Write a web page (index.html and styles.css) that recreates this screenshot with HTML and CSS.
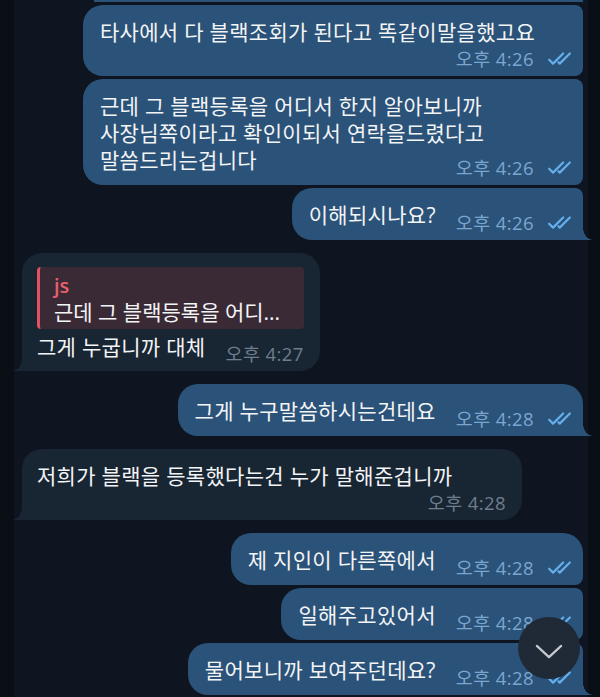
FILE: index.html
```html
<!DOCTYPE html>
<html lang="ko">
<head>
<meta charset="utf-8">
<title>Chat</title>
<link rel="stylesheet" href="styles.css">
</head>
<body>
<div class="screen">
  <div class="chat">
    <div class="row row-out first"><div class="bubble bubble-out bubble-cut"></div></div>

    <div class="row row-out grouped">
      <div class="bubble bubble-out out-mid bubble-wide">
        <span class="text">타사에서 다 블랙조회가 된다고 똑같이말을했고요</span>
        <div class="meta-row"><span class="time">오후 4:26</span><svg class="checks" viewBox="0 0 24 13"><path d="M1 7.2 L4.6 10.8 L14 1.4 M9.6 9.6 L10.8 10.8 L20.2 1.4"/></svg></div>
      </div>
    </div>

    <div class="row row-out grouped">
      <div class="bubble bubble-out out-mid">
        <span class="text">근데 그 블랙등록을 어디서 한지 알아보니까 사장님쪽이라고 확인이되서 연락을드렸다고 말씀드리는겁니다</span>
        <span class="meta"><span class="time">오후 4:26</span><svg class="checks" viewBox="0 0 24 13"><path d="M1 7.2 L4.6 10.8 L14 1.4 M9.6 9.6 L10.8 10.8 L20.2 1.4"/></svg></span>
      </div>
    </div>

    <div class="row row-out grouped">
      <div class="bubble bubble-out out-last">
        <span class="text">이해되시나요?</span>
        <span class="meta"><span class="time">오후 4:26</span><svg class="checks" viewBox="0 0 24 13"><path d="M1 7.2 L4.6 10.8 L14 1.4 M9.6 9.6 L10.8 10.8 L20.2 1.4"/></svg></span>
      </div>
    </div>

    <div class="row row-in">
      <div class="bubble bubble-in in-single">
        <div class="quote">
          <div class="quote-name">js</div>
          <div class="quote-text">근데 그 블랙등록을 어디...</div>
        </div>
        <span class="text">그게 누굽니까 대체</span>
        <span class="meta meta-in"><span class="time">오후 4:27</span></span>
      </div>
    </div>

    <div class="row row-out">
      <div class="bubble bubble-out out-single">
        <span class="text">그게 누구말씀하시는건데요</span>
        <span class="meta"><span class="time">오후 4:28</span><svg class="checks" viewBox="0 0 24 13"><path d="M1 7.2 L4.6 10.8 L14 1.4 M9.6 9.6 L10.8 10.8 L20.2 1.4"/></svg></span>
      </div>
    </div>

    <div class="row row-in">
      <div class="bubble bubble-in in-single bubble-wide">
        <span class="text">저희가 블랙을 등록했다는건 누가 말해준겁니까</span>
        <div class="meta-row"><span class="time">오후 4:28</span></div>
      </div>
    </div>

    <div class="row row-out">
      <div class="bubble bubble-out out-first">
        <span class="text">제 지인이 다른쪽에서</span>
        <span class="meta"><span class="time">오후 4:28</span><svg class="checks" viewBox="0 0 24 13"><path d="M1 7.2 L4.6 10.8 L14 1.4 M9.6 9.6 L10.8 10.8 L20.2 1.4"/></svg></span>
      </div>
    </div>

    <div class="row row-out grouped">
      <div class="bubble bubble-out out-mid">
        <span class="text">일해주고있어서</span>
        <span class="meta"><span class="time">오후 4:28</span><svg class="checks" viewBox="0 0 24 13"><path d="M1 7.2 L4.6 10.8 L14 1.4 M9.6 9.6 L10.8 10.8 L20.2 1.4"/></svg></span>
      </div>
    </div>

    <div class="row row-out grouped">
      <div class="bubble bubble-out out-last">
        <span class="text">물어보니까 보여주던데요?</span>
        <span class="meta"><span class="time">오후 4:28</span><svg class="checks" viewBox="0 0 24 13"><path d="M1 7.2 L4.6 10.8 L14 1.4 M9.6 9.6 L10.8 10.8 L20.2 1.4"/></svg></span>
      </div>
    </div>
  </div>

  <button class="scroll-down" type="button" aria-label="아래로">
    <svg viewBox="0 0 30 16"><polyline points="2,2 15,14 28,2"/></svg>
  </button>
</div>
</body>
</html>
```

FILE: styles.css
```css
* {
  box-sizing: border-box;
}

html,
body {
  margin: 0;
  padding: 0;
}

body {
  width: 600px;
  height: 697px;
  overflow: hidden;
  background: #0a0f16;
  font-family: "Open Sans", "Noto Sans CJK KR", sans-serif;
  color: #f3f4f6;
}

.screen {
  position: relative;
  width: 600px;
  height: 697px;
  overflow: hidden;
}

.chat {
  margin-left: 14px;
  width: 574px;
  height: 697px;
  background: #0e1520;
  padding: 0 5px 0 8px;
  display: flex;
  flex-direction: column;
}

.row {
  display: flex;
  flex: none;
  margin-top: 13px;
}

.row.first {
  margin-top: 0;
}

.row.grouped {
  margin-top: 3px;
}

.row-out {
  justify-content: flex-end;
}

.row-in {
  justify-content: flex-start;
}

.bubble {
  position: relative;
  max-width: 500px;
  padding: 14px 9px 7px 17px;
  font-size: 21px;
  line-height: 27px;
  border-radius: 20px;
}

.bubble-wide {
  width: 500px;
}

.bubble-out {
  --bubble: #2b5278;
  background: var(--bubble);
}

.bubble-in {
  --bubble: #182533;
  background: var(--bubble);
  padding: 14px 16px 7px 15px;
}

.bubble-cut {
  width: 489px;
  height: 2px;
  padding: 0;
  border-radius: 0;
}

.out-first {
  border-radius: 20px 20px 8px 20px;
}

.out-mid {
  border-radius: 20px 8px 8px 20px;
}

.out-last {
  border-radius: 20px 8px 0 20px;
}

.out-single {
  border-radius: 20px 20px 0 20px;
}

.in-single {
  border-radius: 20px 20px 20px 0;
}

.out-last::after,
.out-single::after {
  content: "";
  position: absolute;
  right: -10px;
  bottom: 0;
  width: 10px;
  height: 12px;
  background: radial-gradient(10px 12px at 100% 0, transparent 96%, var(--bubble) 100%);
}

.in-single::before {
  content: "";
  position: absolute;
  left: -10px;
  bottom: 0;
  width: 10px;
  height: 12px;
  background: radial-gradient(10px 12px at 0 0, transparent 96%, var(--bubble) 100%);
}

.text {
  word-break: keep-all;
  letter-spacing: 0.3px;
}

.meta {
  float: right;
  margin: 11px 0 0 20px;
  height: 20px;
  display: flex;
  align-items: center;
  gap: 14px;
}

.meta-in {
  margin: 10px 0 0 20px;
}

.meta-row {
  display: flex;
  justify-content: flex-end;
  align-items: center;
  gap: 14px;
  height: 20px;
  margin-top: 3px;
}

.time {
  font-size: 18.5px;
  line-height: 20px;
  letter-spacing: 0.4px;
  white-space: nowrap;
  color: #7ba6d0;
}

.bubble-in .time {
  color: #6e7e8e;
}

.checks {
  width: 26px;
  height: 14px;
  fill: none;
  stroke: #64b0ee;
  stroke-width: 2;
  stroke-linecap: round;
  stroke-linejoin: round;
}

.quote {
  margin: 0 0 5px;
  background: #3a2a36;
  border-left: 3px solid #e0525f;
  border-radius: 4px;
  padding: 6px 12px 4px 14px;
}

.quote-name {
  color: #e8606e;
  font-weight: 600;
  font-size: 20px;
  line-height: 26px;
}

.quote-text {
  font-size: 21px;
  line-height: 26px;
  white-space: nowrap;
}

.scroll-down {
  position: absolute;
  left: 518px;
  top: 617px;
  width: 62px;
  height: 62px;
  border: 0;
  border-radius: 50%;
  background: #1f2a36;
  padding: 7px 0 0;
  display: flex;
  align-items: center;
  justify-content: center;
}

.scroll-down svg {
  width: 28px;
  height: 15px;
  fill: none;
  stroke: #c5c9cd;
  stroke-width: 2.4;
  stroke-linecap: round;
  stroke-linejoin: round;
}
```
